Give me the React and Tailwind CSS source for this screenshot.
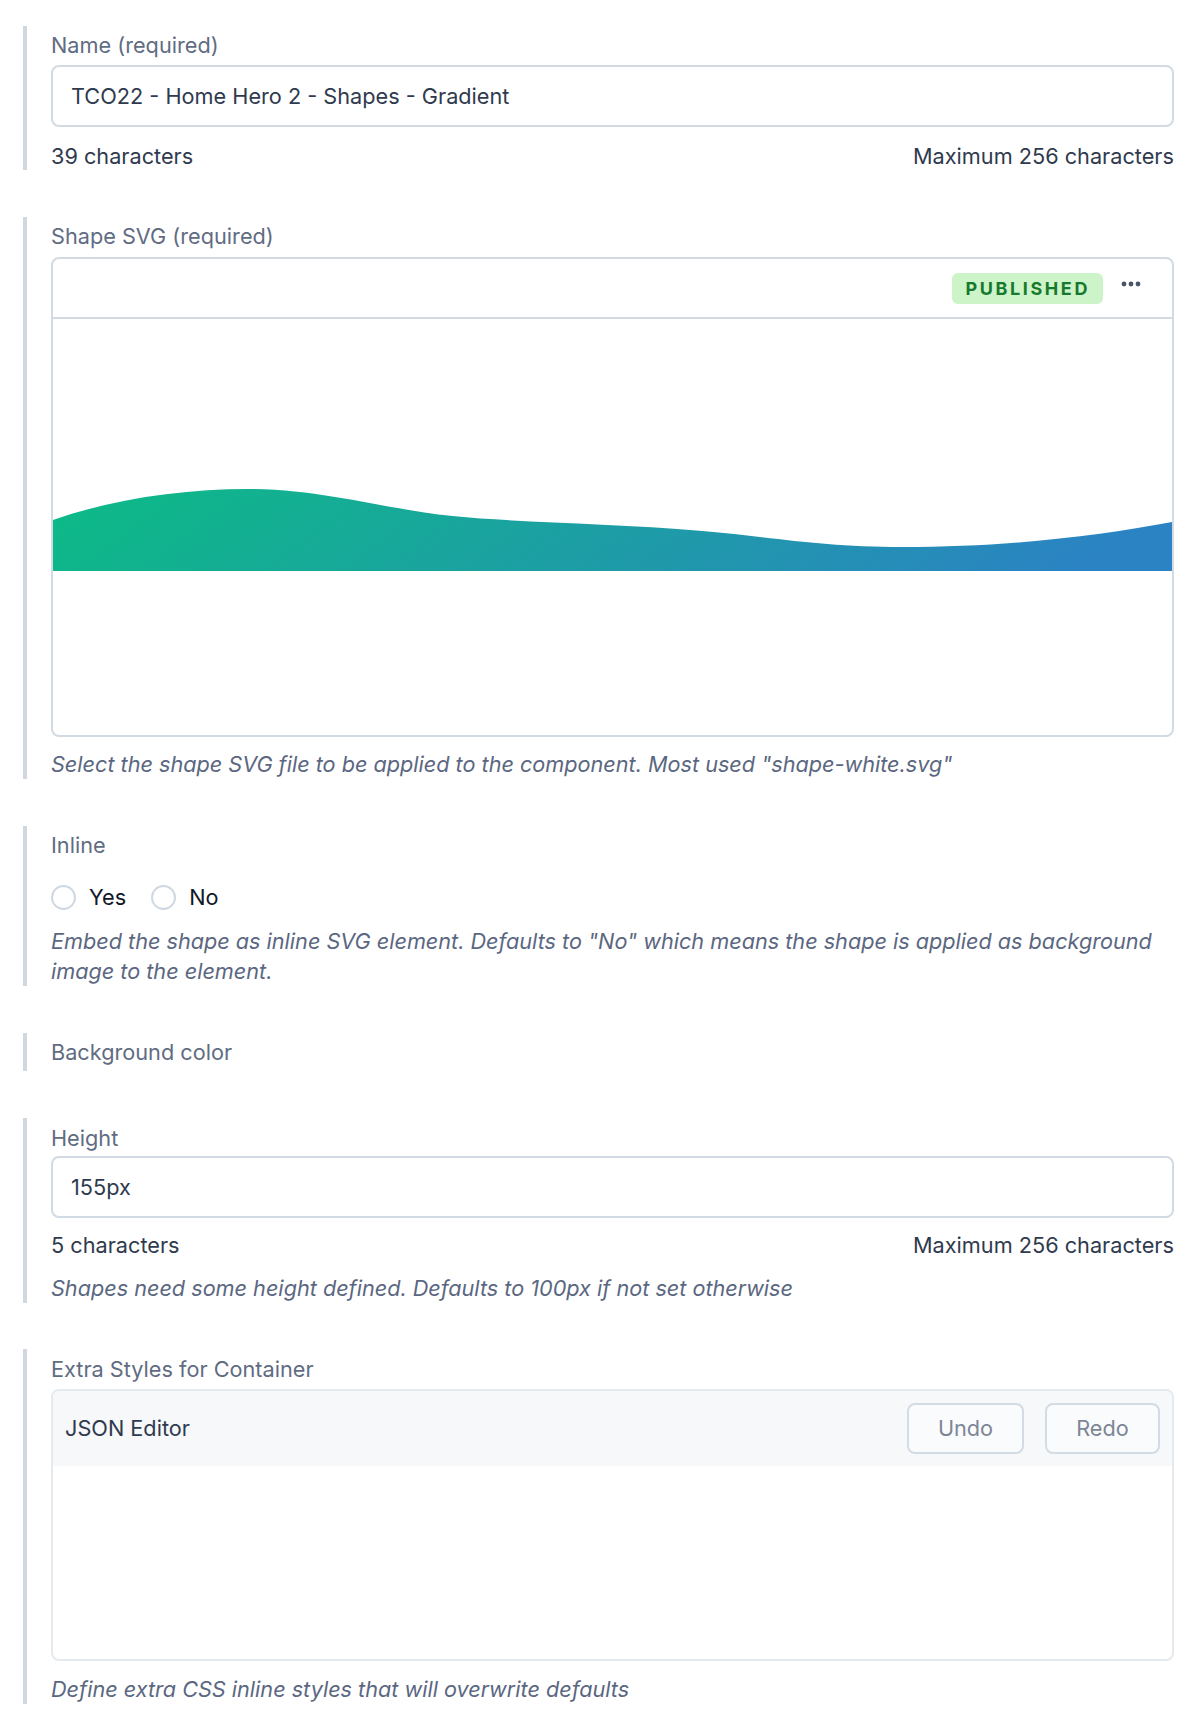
import React from "react";

function Section({ className = "", children }) {
  return (
    <div className={`border-l-4 border-[#cfd8e1] pl-6 ${className}`}>{children}</div>
  );
}

function Label({ children, className = "" }) {
  return (
    <div className={`text-[21.7px] leading-[28px] text-[#5f6c82] ${className}`}>{children}</div>
  );
}

function Help({ children, className = "" }) {
  return (
    <div className={`text-[21.65px] leading-[30px] italic text-[#5b6781] ${className}`}>{children}</div>
  );
}

function Counter({ left, className = "mt-[15px]" }) {
  return (
    <div className={`flex justify-between text-[21.7px] leading-[28px] text-[#2f3a4e] ${className}`}>
      <span>{left}</span>
      <span>Maximum 256 characters</span>
    </div>
  );
}

function TextInput({ value }) {
  return (
    <div className="h-[62px] rounded-lg border-2 border-[#d2dbe3] bg-white flex items-center px-[18px] text-[21.7px] text-[#2f3a4e]">
      {value}
    </div>
  );
}

function Radio({ label }) {
  return (
    <div className="flex items-center gap-[13px]">
      <span className="w-[25px] h-[25px] rounded-full border-2 border-[#cfd8e1] bg-white" />
      <span className="text-[21.7px] leading-[28px] text-[#111827]">{label}</span>
    </div>
  );
}

export default function App() {
  return (
    <div
      className="bg-white min-h-[1731px] pl-[23px] pr-[24px] pt-[26px]"
      style={{ fontFamily: "Inter, 'Noto Sans', sans-serif" }}
    >
      <Section className="pt-[5px]">
        <Label className="mb-[6px]">Name (required)</Label>
        <TextInput value="TCO22 - Home Hero 2 - Shapes - Gradient" />
        <Counter left="39 characters" className="mt-[15px]" />
      </Section>

      <Section className="mt-[47px] pt-[5px]">
        <Label className="mb-[7px]">Shape SVG (required)</Label>
        <div className="rounded-lg border-2 border-[#d2dbe3] bg-white overflow-hidden">
          <div className="h-[60px] border-b-2 border-[#d2dbe3] flex items-center justify-end pr-[31px] gap-[18px]">
            <span className="h-[31px] px-[13px] rounded-md bg-[#cdf4c9] text-[#17792c] font-bold text-[18px] tracking-[2.6px] flex items-center">
              PUBLISHED
            </span>
            <svg width="20" height="6" viewBox="0 0 20 6" className="mb-[9px]">
              <circle cx="3" cy="3" r="2.4" fill="#4a5568" />
              <circle cx="10" cy="3" r="2.4" fill="#4a5568" />
              <circle cx="17" cy="3" r="2.4" fill="#4a5568" />
            </svg>
          </div>
          <div className="h-[416px] flex items-center">
            <svg
              viewBox="0 0 1120 82"
              preserveAspectRatio="none"
              className="w-full h-[82px] block mt-[6px]"
            >
              <defs>
                <linearGradient id="wg" x1="0" y1="0" x2="1" y2="0.1">
                  <stop offset="0" stopColor="#0cbb85" />
                  <stop offset="0.45" stopColor="#1aa39f" />
                  <stop offset="1" stopColor="#2b83c3" />
                </linearGradient>
              </defs>
              <path
                d="M0,31 C60,10 130,0 195,0 C270,0 330,20 400,27 C470,34 560,34 650,42 C720,48 770,58 850,58 C960,58 1050,46 1120,33 L1120,82 L0,82 Z"
                fill="url(#wg)"
              />
            </svg>
          </div>
        </div>
        <Help className="mt-[12px]">
          Select the shape SVG file to be applied to the component. Most used "shape-white.svg"
        </Help>
      </Section>

      <Section className="mt-[47px] pt-[5px]">
        <Label>Inline</Label>
        <div className="flex items-center gap-[25px] mt-[24px]">
          <Radio label="Yes" />
          <Radio label="No" />
        </div>
        <Help className="mt-[15px]">
          Embed the shape as inline SVG element. Defaults to "No" which means the shape is applied as background
          image to the element.
        </Help>
      </Section>

      <Section className="mt-[47px] pt-[5px] pb-[5px]">
        <Label>Background color</Label>
      </Section>

      <Section className="mt-[47px] pt-[6px]">
        <Label className="mb-[4px]">Height</Label>
        <TextInput value="155px" />
        <Counter left="5 characters" className="mt-[13px]" />
        <Help className="mt-[14px]">Shapes need some height defined. Defaults to 100px if not set otherwise</Help>
      </Section>

      <Section className="mt-[46px] pt-[6px]">
        <Label className="mb-[6px]">Extra Styles for Container</Label>
        <div className="rounded-lg border-2 border-[#e5eaef] bg-white overflow-hidden">
          <div className="h-[75px] bg-[#f6f8fa] flex items-center justify-between pl-[12px] pr-[12px]">
            <span className="text-[21.7px] text-[#2f3a4e]">JSON Editor</span>
            <div className="flex gap-[21px]">
              <button className="w-[117px] h-[51px] rounded-lg border-2 border-[#d3dce4] bg-[#fafbfc] text-[21.7px] text-[#7c8696]">
                Undo
              </button>
              <button className="w-[115px] h-[51px] rounded-lg border-2 border-[#d3dce4] bg-[#fafbfc] text-[21.7px] text-[#7c8696]">
                Redo
              </button>
            </div>
          </div>
          <div className="h-[193px]" />
        </div>
        <Help className="mt-[13px]">Define extra CSS inline styles that will overwrite defaults</Help>
      </Section>
    </div>
  );
}
